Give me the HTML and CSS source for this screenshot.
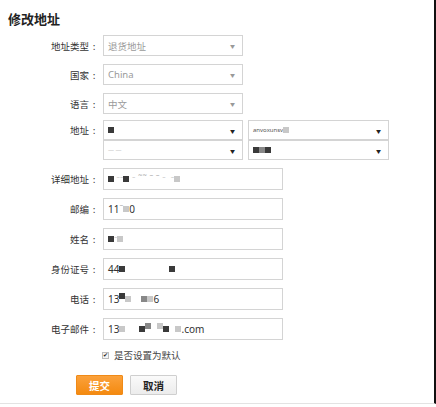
FILE: index.html
```html
<!DOCTYPE html>
<html lang="zh">
<head>
<meta charset="utf-8">
<title>修改地址</title>
<link rel="stylesheet" href="styles.css">
</head>
<body>
<div class="page">
  <h1 class="title">修改地址</h1>
  <div class="form">
    <div class="row row-sel">
      <label class="label">地址类型<span class="colon">:</span></label>
      <div class="select muted"><span class="val">退货地址</span><span class="arrow">▼</span></div>
    </div>
    <div class="row row-sel">
      <label class="label">国家<span class="colon">:</span></label>
      <div class="select muted"><span class="val">China</span><span class="arrow">▼</span></div>
    </div>
    <div class="row row-sel">
      <label class="label">语言<span class="colon">:</span></label>
      <div class="select muted"><span class="val">中文</span><span class="arrow">▼</span></div>
    </div>
    <div class="row row-addr">
      <label class="label label-top">地址<span class="colon">:</span></label>
      <div class="addr-grid">
        <div class="select small"><span class="val"><i class="px dk"></i></span><span class="arrow dark">▼</span></div>
        <div class="select small wide"><span class="val tiny">anvoxunsv<i class="px lt"></i></span><span class="arrow dark">▼</span></div>
        <div class="select small"><span class="val tiny faint">— —</span><span class="arrow dark">▼</span></div>
        <div class="select small wide"><span class="val"><i class="px dk"></i><i class="px md"></i><i class="px dk"></i></span><span class="arrow dark">▼</span></div>
      </div>
    </div>
    <div class="row row-in">
      <label class="label">详细地址<span class="colon">:</span></label>
      <div class="input"><i class="px dk"></i><span class="faint">&nbsp;⁻⁻</span><i class="px dk"></i><span class="faint">&nbsp;⁻ ˜˜ ˉ ˉ ⁻ &nbsp;⁻</span><i class="px lt"></i></div>
    </div>
    <div class="row row-in">
      <label class="label">邮编<span class="colon">:</span></label>
      <div class="input">11<span class="faint">ˉ</span><i class="px lt"></i>0</div>
    </div>
    <div class="row row-in">
      <label class="label">姓名<span class="colon">:</span></label>
      <div class="input"><i class="px dk"></i><span class="faint">⁻</span><i class="px lt"></i></div>
    </div>
    <div class="row row-in">
      <label class="label">身份证号<span class="colon">:</span></label>
      <div class="input">44<i class="px dk"></i><span class="spacer s1"></span><i class="px dk"></i></div>
    </div>
    <div class="row row-in">
      <label class="label">电话<span class="colon">:</span></label>
      <div class="input">13<i class="px dk up"></i><i class="px lt"></i><span class="spacer s2"></span><i class="px md"></i><i class="px lt"></i>6</div>
    </div>
    <div class="row row-in">
      <label class="label">电子邮件<span class="colon">:</span></label>
      <div class="input">13<i class="px lt"></i><span class="spacer s3"></span><i class="px dk"></i><i class="px md up"></i><span class="spacer s4"></span><i class="px lt up"></i><i class="px dk"></i><span class="spacer s4"></span><i class="px lt"></i>.com</div>
    </div>
    <div class="check-row">
      <span class="checkbox">✔</span>
      <span class="check-text">是否设置为默认</span>
    </div>
    <div class="buttons">
      <button class="btn btn-primary">提交</button>
      <button class="btn btn-default">取消</button>
    </div>
  </div>
</div>
</body>
</html>
```

FILE: styles.css
```css
* { box-sizing: border-box; }
html, body { margin: 0; padding: 0; }
body {
  width: 436px;
  height: 407px;
  background: #fff;
  font-family: "Noto Sans", "Noto Sans CJK SC", sans-serif;
  color: #333;
  overflow: hidden;
}
.page {
  border-right: 2px solid #111;
  border-bottom: 1px solid #e3e3e3;
  padding: 9px 0 0 8px;
  height: 404px;
}
.title {
  margin: 0;
  font-family: "Noto Sans CJK SC", sans-serif;
  font-size: 13px;
  line-height: 20px;
  font-weight: bold;
  color: #222;
}
.form { margin-top: 6px; }
.row { display: flex; align-items: center; }
.label {
  width: 90px;
  text-align: right;
  font-family: "Noto Sans CJK SC", sans-serif;
  font-size: 9.5px;
  color: #333;
  flex-shrink: 0;
}
.colon {
  display: inline-block;
  width: 8px;
  text-align: center;
  margin-left: 1px;
}
.label-top { align-self: flex-start; line-height: 20px; }
.row-sel { margin-bottom: 8px; }
.row-sel:nth-child(3) { margin-bottom: 6px; }
.select {
  width: 140px;
  height: 21px;
  border: 1px solid #d4d4d4;
  background: #fff;
  display: flex;
  align-items: center;
  justify-content: space-between;
  padding: 0 7px 0 4px;
  font-size: 9.5px;
  margin-left: 5px;
}
.select.muted { color: #9a9a9a; }
.select .arrow { font-size: 5px; color: #999; }
.select .arrow.dark { color: #222; }
.addr-grid {
  margin-left: 5px;
  display: grid;
  grid-template-columns: 140px 141px;
  column-gap: 5px;
}
.addr-grid .select { margin-left: 0; height: 20px; }
.addr-grid .select.wide { width: 141px; }
.row-addr { margin-bottom: 8px; }
.val { display: flex; align-items: center; }
.tiny { font-size: 6px; color: #555; }
.faint { color: #bbb; }
.px {
  display: inline-block;
  width: 6px;
  height: 6px;
  background: #555;
}
.px.dk { background: #3a3a3a; }
.px.md { background: #888; }
.px.lt { background: #c8c8c8; }
.px.up { position: relative; top: -3px; }
.input {
  width: 180px;
  height: 22px;
  border: 1px solid #d4d4d4;
  background: #fff;
  display: flex;
  align-items: center;
  padding: 0 4px;
  font-size: 10px;
  color: #333;
  margin-left: 5px;
}
.row-in { margin-bottom: 8px; }
.spacer { display: inline-block; }
.s1 { width: 44px; }
.s2 { width: 10px; }
.s3 { width: 14px; }
.s4 { width: 6px; }
.check-row {
  display: flex;
  align-items: center;
  margin-left: 94px;
  margin-top: 5px;
  height: 14px;
}
.checkbox {
  width: 7px;
  height: 7px;
  border: 1px solid #bbb;
  background: #f4f4f4;
  font-size: 6px;
  line-height: 5px;
  color: #222;
  text-align: center;
}
.check-text {
  margin-left: 5px;
  font-family: "Noto Sans CJK SC", sans-serif;
  font-size: 9.5px;
  color: #444;
}
.buttons {
  display: flex;
  gap: 7px;
  margin-left: 68px;
  margin-top: 13px;
}
.btn {
  width: 47px;
  height: 20px;
  font-family: "Noto Sans CJK SC", sans-serif;
  font-size: 10.5px;
  font-weight: bold;
  padding: 0;
  border-radius: 1px;
}
.btn-primary {
  background: linear-gradient(#fba13b, #f48a10);
  border: 1px solid #f08a17;
  color: #fff;
}
.btn-default {
  background: linear-gradient(#fafafa, #ececec);
  border: 1px solid #cfcfcf;
  color: #222;
}
```
